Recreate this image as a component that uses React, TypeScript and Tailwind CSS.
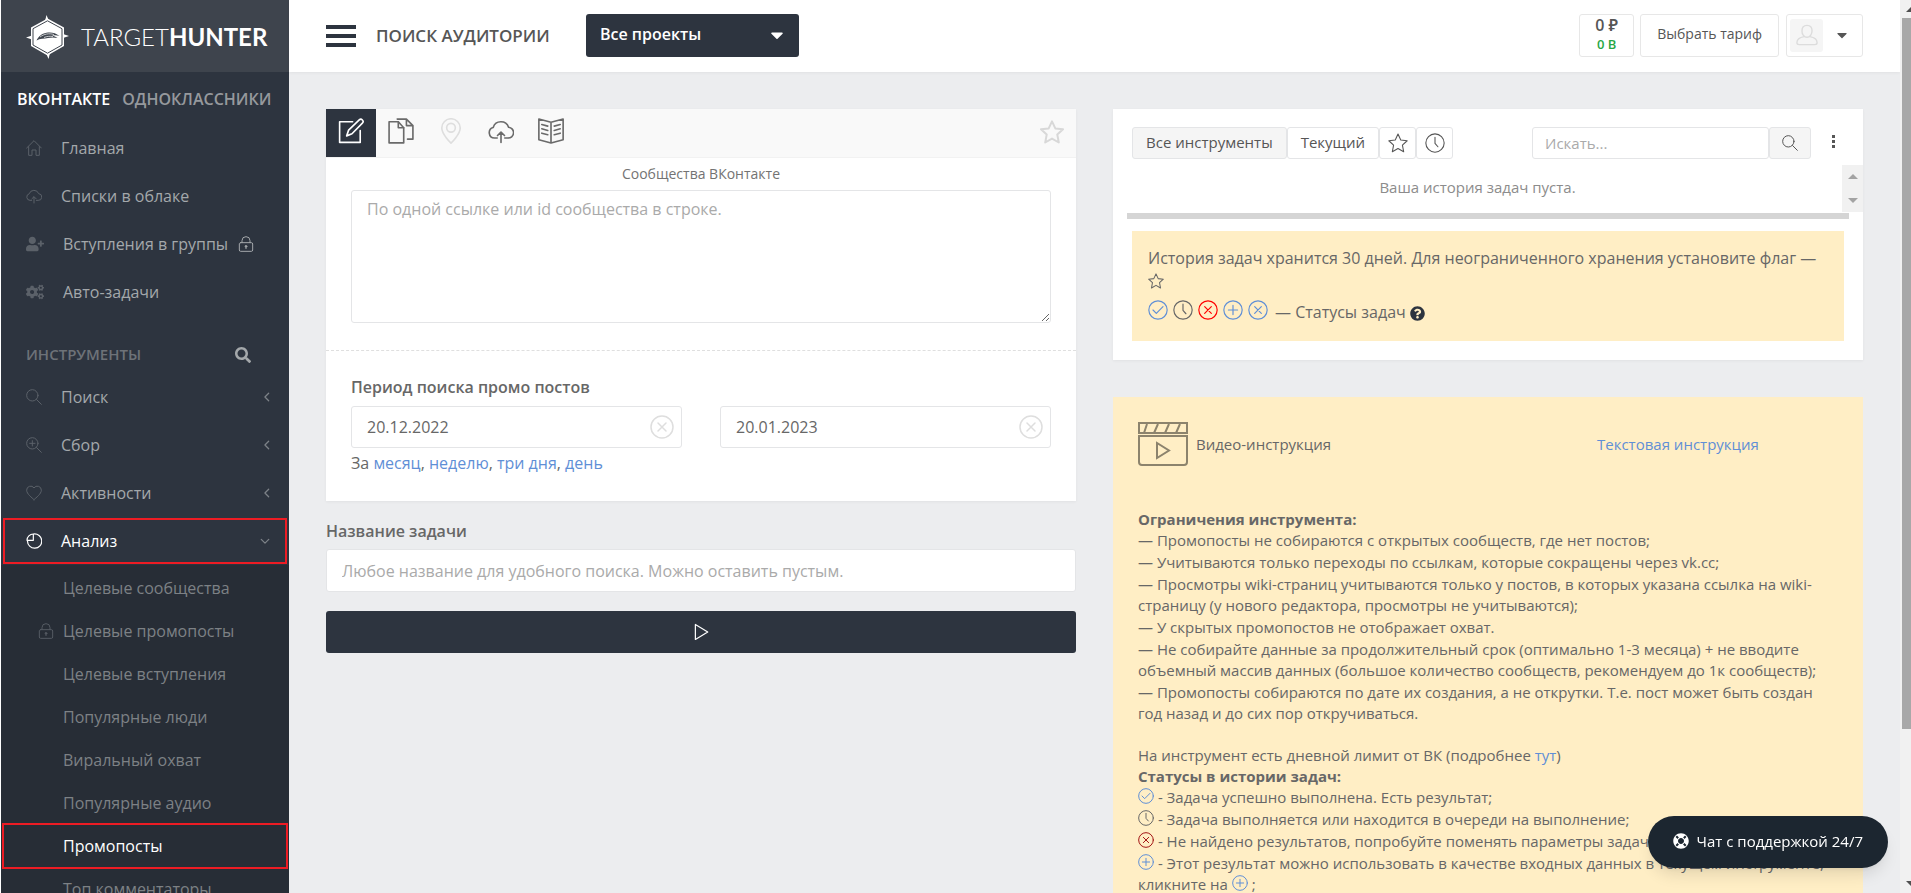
import React, { useState } from 'react';
import { FaCaretDown, FaCogs, FaLifeRing, FaQuestionCircle, FaSearch, FaUserPlus } from 'react-icons/fa';

interface IconProps {
  className?: string;
  strokeWidth?: number;
}

function Stroke({ className, strokeWidth = 1, children }: IconProps & { children: React.ReactNode }) {
  return (
    <svg
      className={className}
      viewBox="0 0 24 24"
      fill="none"
      stroke="currentColor"
      strokeWidth={strokeWidth}
      strokeLinejoin="round"
      strokeLinecap="round"
      aria-hidden="true"
    >
      {children}
    </svg>
  );
}

const HomeIcon = (p: IconProps) => (
  <Stroke {...p}>
    <path d="M1 12 12 1l11 11M4 10v13h5v-8h6v8h5V10" />
  </Stroke>
);

const CloudIcon = (p: IconProps) => (
  <Stroke {...p}>
    <path d="M8.500 18.500H6a5 5 0 0 1-1.200-9.800A7.500 7.500 0 0 1 19 8.500a5 5 0 0 1-.8 10h-2.700M12 22.500v-9M8.800 16.200 12 13l3.200 3.200" />
  </Stroke>
);

const LockIcon = (p: IconProps) => (
  <Stroke {...p}>
    <path d="M4 10h16a2 2 0 0 1 2 2v9a2 2 0 0 1-2 2H4a2 2 0 0 1-2-2v-9c0-1.100.9-2 2-2ZM6 10V7a6 6 0 0 1 12 0v3M12 17v2" />
    <circle cx="12" cy="15.500" r="1.300" fill="currentColor" />
  </Stroke>
);

const SearchIcon = (p: IconProps) => (
  <Stroke {...p}>
    <circle cx="9.500" cy="9.500" r="8.500" />
    <path d="m15.800 15.800 7.200 7.200" />
  </Stroke>
);

const ZoomInIcon = (p: IconProps) => (
  <Stroke {...p}>
    <circle cx="9.500" cy="9.500" r="8.500" />
    <path d="m15.800 15.800 7.200 7.200M9.500 5.500v8M5.500 9.500h8" />
  </Stroke>
);

const HeartIcon = (p: IconProps) => (
  <Stroke {...p}>
    <path d="M12 22C9 19 1 13.500 1 7.800a6 6 0 0 1 11-3.400A6 6 0 0 1 23 7.800C23 13.500 15 19 12 22Z" />
  </Stroke>
);

const PieIcon = (p: IconProps) => (
  <Stroke {...p}>
    <path d="M11.500 1.500A10.700 10.700 0 1 1 2.200 12M11 1.500v9.500H1.500a9.500 9.500 0 0 1 9.500-9.500Z" />
  </Stroke>
);

const EditIcon = (p: IconProps) => (
  <Stroke {...p}>
    <path d="M13.500 3.500H1.500v19h19v-11" />
    <path d="m8 16.500 1.800-5.300 9.800-9.400a2 2 0 0 1 2.900 2.900l-9.600 9.800L8 16.500Z" />
  </Stroke>
);

const CopyIcon = (p: IconProps) => (
  <Stroke {...p}>
    <path d="M1 3.500h8.500l5 5.500v14H1v-19.500Z" />
    <path d="M9.500 3.500V9h5M8.500 1h8.500l6 6v12.500h-5M17 1v6h6" />
  </Stroke>
);

const PinIcon = (p: IconProps) => (
  <Stroke {...p}>
    <path d="M12 23.200S20.500 15 20.500 9.200a8.500 8.500 0 0 0-17 0C3.500 15 12 23.200 12 23.200Z" />
    <circle cx="12" cy="9" r="4" />
  </Stroke>
);

const BookIcon = (p: IconProps) => (
  <Stroke {...p}>
    <path d="M12 4 .8 1v19L12 23l11.200-3V1L12 4Zm0 0v19" />
    <path d="m3.500 6 5.500 1.500M3.500 10 9 11.500M3.500 14 9 15.500M20.500 6 15 7.500m5.500 2.500L15 11.500m5.500 2.500L15 15.500" />
  </Stroke>
);

const StarIcon = (p: IconProps) => (
  <Stroke {...p}>
    <path d="m12 1.300 3.300 7.100 7.700.9-5.700 5.300 1.500 7.900-6.800-3.900-6.800 3.900 1.500-7.900L1 9.300l7.700-.9L12 1.300Z" />
  </Stroke>
);

const ClockIcon = (p: IconProps) => (
  <Stroke {...p}>
    <circle cx="12" cy="12" r="11" />
    <path d="M12 5v7.500l3.500 4" />
  </Stroke>
);

const CheckCircleIcon = (p: IconProps) => (
  <Stroke {...p}>
    <circle cx="12" cy="12" r="11" />
    <path d="m6 12 4 4 8-8" />
  </Stroke>
);

const CrossCircleIcon = (p: IconProps) => (
  <Stroke {...p}>
    <circle cx="12" cy="12" r="11" />
    <path d="m8 8 8 8m0-8-8 8" />
  </Stroke>
);

const PlusCircleIcon = (p: IconProps) => (
  <Stroke {...p}>
    <circle cx="12" cy="12" r="11" />
    <path d="M12 6.500v11M6.500 12h11" />
  </Stroke>
);

const UserIcon = (p: IconProps) => (
  <Stroke {...p}>
    <path d="M12 1.500c-3.500 0-5.500 2.500-5.500 6 0 3.800 2.300 7 5.500 7s5.500-3.200 5.500-7c0-3.500-2-6-5.500-6Z" />
    <path d="M8.800 13.700C4 14.500 1 17 1 20.500c0 1.500 1 2 2.500 2h17c1.500 0 2.500-.5 2.500-2 0-3.500-3-6-7.800-6.800" />
  </Stroke>
);

const ChevronIcon = (p: IconProps) => (
  <Stroke {...p}>
    <path d="m16 3-9 9 9 9" />
  </Stroke>
);

const PlayIcon = (p: IconProps) => (
  <Stroke {...p}>
    <path d="M4.500 2v20L21 12 4.500 2Z" />
  </Stroke>
);

function ClapperIcon() {
  return (
    <svg className="h-11 w-[50px] text-[#8c836d]" viewBox="0 0 50 44" fill="none" stroke="currentColor" strokeWidth="2" aria-hidden="true">
      <path d="M1 1h48v10H1zM9 2 6 11M20 2l-4 9M31 2l-4 9M42 2l-4 9" />
      <path d="M1 14h48v26a3 3 0 0 1-3 3H4a3 3 0 0 1-3-3V14Z" />
      <path d="M19 21v15l12-7.500L19 21Z" />
    </svg>
  );
}

function Logo() {
  return (
    <svg className="h-11 w-[43px]" viewBox="0 0 43 44" aria-hidden="true">
      <path d="m20.500 0 2.500 6h-4ZM22.500 44 20 38h4ZM0 22.500l6-2v4ZM43 21l-6-2v4Z" fill="#fff" />
      <path d="M21.500 3.500 38 12.500v18.500L21.500 40.500 5 31V12.500Z" fill="#fff" />
      <path d="M21.500 5.800 36 13.700v16.300L21.500 38.200 7 30V13.700Z" fill="none" stroke="#3e444d" strokeWidth="1" />
      <path d="M10.500 25.500c2-4 5-7 10-7.800 5-.8 9 .2 13 3.300-3-.8-5-.8-7.500-.2 2 .2 4 1 5.500 2.200-4-1-7-.5-9.500 0-4 .8-8 .3-11.500 2.500Z" fill="#3e444d" />
      <path d="M14 22c4-3 9-4 14-2.500M18 22.500c3-1.200 6-1.500 9-1" stroke="#fff" strokeWidth=".7" fill="none" />
    </svg>
  );
}

const mainNav = [
  { label: 'Главная', icon: <HomeIcon className="h-4 w-4" strokeWidth={1.5} /> },
  { label: 'Списки в облаке', icon: <CloudIcon className="h-4 w-4" strokeWidth={1.5} /> },
  { label: 'Вступления в группы', icon: <FaUserPlus className="mr-[19px] h-4 w-[18px]" />, locked: true },
  { label: 'Авто-задачи', icon: <FaCogs className="mr-[19px] h-4 w-[18px]" /> },
];

const toolNav = [
  { label: 'Поиск', icon: <SearchIcon className="h-4 w-4" strokeWidth={1.5} /> },
  { label: 'Сбор', icon: <ZoomInIcon className="h-4 w-4" strokeWidth={1.5} /> },
  { label: 'Активности', icon: <HeartIcon className="h-4 w-4" strokeWidth={1.5} /> },
  { label: 'Анализ', icon: <PieIcon className="h-4 w-4" strokeWidth={1.8} />, active: true },
];

const analysisNav = [
  { label: 'Целевые сообщества' },
  { label: 'Целевые промопосты', locked: true },
  { label: 'Целевые вступления' },
  { label: 'Популярные люди' },
  { label: 'Виральный охват' },
  { label: 'Популярные аудио' },
  { label: 'Промопосты', active: true },
  { label: 'Топ комментаторы' },
];

const limits = [
  'Промопосты не собираются с открытых сообществ, где нет постов;',
  'Учитываются только переходы по ссылкам, которые сокращены через vk.cc;',
  'Просмотры wiki-страниц учитываются только у постов, в которых указана ссылка на wiki-страницу (у нового редактора, просмотры не учитываются);',
  'У скрытых промопостов не отображает охват.',
  'Не собирайте данные за продолжительный срок (оптимально 1-3 месяца) + не вводите объемный массив данных (большое количество сообществ, рекомендуем до 1к сообществ);',
  'Промопосты собираются по дате их создания, а не открутки. Т.е. пост может быть создан год назад и до сих пор откручиваться.',
];

function Sidebar() {
  return (
    <aside className="ml-px flex w-72 shrink-0 flex-col overflow-hidden bg-[#2d343f] text-base text-[#a4a8ab]">
      <a href="#" className="flex h-[72px] shrink-0 items-center gap-3 bg-[#3e444d] pt-0.5 pl-[25px] font-[Lato,sans-serif] text-[24px] text-white">
        <Logo />
        <span>
          <span className="font-light">TARGET</span>
          <span className="font-bold">HUNTER</span>
        </span>
      </a>
      <div className="flex h-13 shrink-0 items-center gap-3 pt-px pl-4 font-semibold">
        <a href="#" className="text-white">ВКОНТАКТЕ</a>
        <a href="#" className="text-[#96999d]">ОДНОКЛАССНИКИ</a>
      </div>
      <nav>
        <ul>
          {mainNav.map((item) => (
            <li key={item.label}>
              <a href="#" className="flex h-12 items-center pl-[25px]">
                <span className="min-w-[35px] text-[#5b6169]">{item.icon}</span>
                {item.label}
                {item.locked && <LockIcon className="ml-2.5 h-4 w-4" strokeWidth={1.5} />}
              </a>
            </li>
          ))}
        </ul>
        <div className="flex h-[57px] items-center justify-between pt-5 pr-[38px] pl-[25px]">
          <h2 className="text-[15px] font-semibold text-[#6d7278]">ИНСТРУМЕНТЫ</h2>
          <button type="button" aria-label="Поиск инструмента">
            <FaSearch className="h-4 w-4" />
          </button>
        </div>
        <ul>
          {toolNav.map((item) => (
            <li key={item.label} className="relative">
              <a href="#" className={`flex h-12 items-center pr-[17px] pl-[25px] ${item.active ? 'text-white' : ''}`}>
                <span className={`w-[35px] ${item.active ? 'text-white' : 'text-[#5b6169]'}`}>{item.icon}</span>
                <span className="flex-1">{item.label}</span>
                <ChevronIcon className={`h-2.5 w-2.5 text-[#7d8288] ${item.active ? 'mr-0.5 -rotate-90' : ''}`} strokeWidth={3} />
              </a>
              {item.active && <span className="pointer-events-none absolute inset-x-0.5 inset-y-px border-2 border-[#ed1c24]" />}
            </li>
          ))}
        </ul>
        <ul className="bg-[#272d36] pt-px text-[#7d8185]">
          {analysisNav.map((item) => (
            <li key={item.label} className="relative">
              <a href="#" className={`flex h-[43px] items-center ${item.active ? 'text-white' : ''}`}>
                <span className="flex w-[62px] justify-end pr-[9px] text-[#555b63]">
                  {item.locked && <LockIcon className="h-4 w-4" strokeWidth={1.5} />}
                </span>
                {item.label}
              </a>
              {item.active && <span className="pointer-events-none absolute inset-x-px -top-px -bottom-0.5 border-2 border-[#ed1c24]" />}
            </li>
          ))}
        </ul>
      </nav>
    </aside>
  );
}

function Header() {
  return (
    <header className="flex h-[72px] shrink-0 items-center bg-white pr-[37px] pl-[37px] text-[#565656] shadow-[0_1px_3px_rgba(0,0,0,0.05)]">
      <button type="button" aria-label="Меню" className="mr-5 flex w-[30px] flex-col gap-[5px]">
        <span className="h-1 bg-[#2d343f]" />
        <span className="h-1 bg-[#2d343f]" />
        <span className="h-1 bg-[#2d343f]" />
      </button>
      <h1 className="w-[210px] text-[17px] font-semibold whitespace-nowrap">ПОИСК АУДИТОРИИ</h1>
      <div className="relative mb-0.5 w-[213px]">
        <select
          aria-label="Проект"
          className="h-[43px] w-full appearance-none rounded-[3px] bg-[#2d343f] px-3.5 pb-0.5 text-base font-semibold text-white"
        >
          <option>Все проекты</option>
        </select>
        <FaCaretDown className="pointer-events-none absolute top-[11px] right-3 h-5 w-5 text-white" />
      </div>
      <div className="mb-0.5 ml-auto flex">
        <a href="#" className="mr-1.5 flex h-[43px] w-[55px] flex-col items-center justify-center rounded-[3px] border border-[#e7e7e7] pb-0.5 font-semibold">
          <span className="text-base leading-5">0 ₽</span>
          <span className="text-[13px] leading-[18px] text-[#28a745]">0 B</span>
        </a>
        <a href="#" className="mr-[7px] flex h-[43px] items-center rounded-[3px] border border-[#e7e7e7] px-4 pb-0.5 text-sm font-medium">
          Выбрать тариф
        </a>
        <button type="button" aria-label="Профиль" className="flex h-[43px] w-[77px] items-center justify-between rounded-[3px] border border-[#e7e7e7] pr-3 pl-[3px]">
          <span className="flex h-[33px] w-[33px] items-center justify-center rounded-[3px] bg-[#f5f5f5] text-[#dcdcdc]">
            <UserIcon className="h-[22px] w-[22px]" strokeWidth={1.5} />
          </span>
          <FaCaretDown className="h-4 w-4" />
        </button>
      </div>
    </header>
  );
}

const inputTabs = [
  { label: 'Ввести вручную', icon: EditIcon },
  { label: 'Из задачи', icon: CopyIcon },
  { label: 'Точка на карте', icon: PinIcon, disabled: true },
  { label: 'Из облака', icon: CloudIcon },
  { label: 'Из каталога', icon: BookIcon },
];

function DateField({ label, initial }: { label: string; initial: string }) {
  const [value, setValue] = useState(initial);
  return (
    <div className="relative flex-1">
      <input
        type="text"
        aria-label={label}
        value={value}
        onChange={(e) => setValue(e.target.value)}
        className="h-[42px] w-full rounded-[3px] border border-[#e4e5e7] bg-white px-[15px] text-base"
      />
      <button type="button" aria-label="Очистить" onClick={() => setValue('')} className="absolute top-[9px] right-2 text-[#dedede]">
        <CrossCircleIcon className="h-6 w-6" strokeWidth={1.5} />
      </button>
    </div>
  );
}

function TaskForm() {
  const [tab, setTab] = useState(0);
  return (
    <form className="min-w-0 flex-1 text-base" onSubmit={(e) => e.preventDefault()}>
      <div className="bg-white pb-[26px] shadow-[0_1px_3px_rgba(0,0,0,0.05)]">
        <div className="flex h-[49px] items-start border-b border-[#f2f2f2] bg-[#f9f9f9]">
          {inputTabs.map(({ label, icon: TabIcon, disabled }, i) => (
            <button
              key={label}
              type="button"
              aria-label={label}
              disabled={disabled}
              onClick={() => setTab(i)}
              className={`flex h-12 w-[50px] items-center justify-center pb-1 ${
                tab === i ? 'bg-[#2d343f] text-white' : disabled ? 'text-[#dedede]' : 'text-[#6a6a6a]'
              }`}
            >
              <TabIcon className="h-[26px] w-[26px]" strokeWidth={1.5} />
            </button>
          ))}
          <button type="button" aria-label="В избранное" className="mt-[11px] mr-3 ml-auto text-[#d8d8d8]">
            <StarIcon className="h-6 w-6" strokeWidth={2} />
          </button>
        </div>
        <div className="px-[25px]">
          <label htmlFor="groups" className="block h-8 text-center text-sm leading-8 text-[#737373]">
            Сообщества ВКонтакте
          </label>
          <textarea
            id="groups"
            placeholder="По одной ссылке или id сообщества в строке."
            className="block h-[133px] w-full rounded-[3px] border border-[#e4e5e7] px-[15px] py-1.5 placeholder:text-[#aaaaaa]"
          />
        </div>
        <hr className="mt-[27px] border-dashed border-[#dfdfdf]" />
        <div className="px-[25px] pt-6">
          <h3 className="mb-[7px] font-semibold">Период поиска промо постов</h3>
          <div className="flex gap-[38px]">
            <DateField label="Дата начала" initial="20.12.2022" />
            <DateField label="Дата окончания" initial="20.01.2023" />
          </div>
          <p className="mt-[3px]">
            За <a href="#" className="text-[#5f8fd6]">месяц</a>, <a href="#" className="text-[#5f8fd6]">неделю</a>,{' '}
            <a href="#" className="text-[#5f8fd6]">три дня</a>, <a href="#" className="text-[#5f8fd6]">день</a>
          </p>
        </div>
      </div>
      <label htmlFor="task-name" className="mt-[18px] mb-1.5 block font-semibold">
        Название задачи
      </label>
      <input
        id="task-name"
        type="text"
        placeholder="Любое название для удобного поиска. Можно оставить пустым."
        className="block h-[43px] w-full rounded-[3px] border border-[#e4e5e7] bg-white px-[15px] placeholder:text-[#aaaaaa]"
      />
      <button type="submit" aria-label="Запустить" className="mt-[19px] flex h-[42px] w-full items-center justify-center rounded-[3px] bg-[#2d343f] text-white">
        <PlayIcon className="h-[18px] w-[18px]" strokeWidth={1.6} />
      </button>
    </form>
  );
}

function History() {
  const chip = 'flex h-8 items-center justify-center rounded-[3px] border border-[#e4e5e7]';
  return (
    <section className="bg-white pt-[18px] pb-[19px] shadow-[0_1px_3px_rgba(0,0,0,0.05)]">
      <div className="flex pr-[27px] pl-[19px] text-[15px] text-[#565656]">
        <button type="button" className={`${chip} bg-[#f5f5f5] px-[13px] pb-0.5`}>Все инструменты</button>
        <button type="button" className={`${chip} px-[13px] pb-0.5`}>Текущий</button>
        <button type="button" aria-label="Избранные" className={`${chip} w-[37px]`}>
          <StarIcon className="h-5 w-5" strokeWidth={1.3} />
        </button>
        <button type="button" aria-label="В процессе" className={`${chip} w-[37px]`}>
          <ClockIcon className="h-5 w-5" strokeWidth={1.3} />
        </button>
        <input
          type="search"
          aria-label="Искать"
          placeholder="Искать..."
          className="ml-auto h-8 w-[237px] rounded-[3px] border border-[#e4e5e7] px-3 placeholder:text-[#aaaaaa]"
        />
        <button type="button" aria-label="Найти" className={`${chip} w-[42px] bg-[#f5f5f5]`}>
          <SearchIcon className="h-4 w-4" strokeWidth={1.5} />
        </button>
        <button type="button" aria-label="Ещё" className="ml-[19px] flex h-7 w-1.5 flex-col items-center justify-center gap-0.5">
          <span className="h-[3px] w-[3px] bg-[#565656]" />
          <span className="h-[3px] w-[3px] bg-[#565656]" />
          <span className="h-[3px] w-[3px] bg-[#565656]" />
        </button>
      </div>
      <div className="mt-1.5 flex h-[47px]">
        <p className="flex-1 self-center pb-0.5 text-center text-[15px] text-[#8c8c8c]">Ваша история задач пуста.</p>
        <div className="flex w-[21px] flex-col items-center justify-between bg-[#f1f1f1] py-[9px]" aria-hidden="true">
          <span className="border-x-[5px] border-b-[5px] border-x-transparent border-b-[#a3a3a3]" />
          <span className="border-x-[5px] border-t-[5px] border-x-transparent border-t-[#a3a3a3]" />
        </div>
      </div>
      <div className="mt-px mr-3.5 ml-3.5 h-1.5 bg-[#d5d5d5]" />
      <div className="mx-[19px] mt-3 bg-[#ffeec5] px-4 pt-[15px] pb-[18px]">
        <p className="leading-6">
          История задач хранится 30 дней. Для неограниченного хранения установите флаг —{' '}
          <StarIcon className="inline h-4 w-4 align-[-1px]" strokeWidth={1.6} />
        </p>
        <div className="mt-[3px] flex items-center gap-[5px]">
          <CheckCircleIcon className="h-5 w-5 text-[#5f8fd6]" strokeWidth={1.4} />
          <ClockIcon className="h-5 w-5" strokeWidth={1.4} />
          <CrossCircleIcon className="h-5 w-5 text-[#ff0000]" strokeWidth={1.4} />
          <PlusCircleIcon className="h-5 w-5 text-[#5f8fd6]" strokeWidth={1.4} />
          <CrossCircleIcon className="h-5 w-5 text-[#5f8fd6]" strokeWidth={1.4} />
          <span className="flex items-center gap-1 pt-1 pl-0.5 leading-[22px]">
            — Статусы задач <FaQuestionCircle className="mt-0.5 h-[15px] w-[15px] text-[#2d343f]" />
          </span>
        </div>
      </div>
    </section>
  );
}

function Instruction() {
  const inline = 'inline h-4 w-4 align-[-1px]';
  return (
    <section className="bg-[#ffeec5] px-[25px] pt-[25px] pb-8 text-[15px] leading-[21px]">
      <div className="grid grid-cols-[1fr_241px] items-center">
        <a href="#" className="flex items-center gap-2">
          <ClapperIcon />
          Видео-инструкция
        </a>
        <a href="#" className="text-[#5f8fd6]">Текстовая инструкция</a>
      </div>
      <h3 className="mt-[43px] font-bold">Ограничения инструмента:</h3>
      <ul className="space-y-px">
        {limits.map((text) => (
          <li key={text}>{`— ${text}`}</li>
        ))}
      </ul>
      <p className="mt-[21px]">
        На инструмент есть дневной лимит от ВК (подробнее <a href="#" className="text-[#5f8fd6]">тут</a>)
      </p>
      <h3 className="font-bold">Статусы в истории задач:</h3>
      <ul className="space-y-px">
        <li><CheckCircleIcon className={`${inline} text-[#5f8fd6]`} strokeWidth={1.5} /> - Задача успешно выполнена. Есть результат;</li>
        <li><ClockIcon className={inline} strokeWidth={1.5} /> - Задача выполняется или находится в очереди на выполнение;</li>
        <li><CrossCircleIcon className={`${inline} text-[#a31515]`} strokeWidth={1.5} /> - Не найдено результатов, попробуйте поменять параметры задачи;</li>
        <li>
          <PlusCircleIcon className={`${inline} text-[#5f8fd6]`} strokeWidth={1.5} /> - Этот результат можно использовать в качестве входных данных в текущем инструменте, кликните на{' '}
          <PlusCircleIcon className={`${inline} text-[#5f8fd6]`} strokeWidth={1.5} /> ;
        </li>
      </ul>
    </section>
  );
}

function PageScrollbar() {
  return (
    <div className="flex w-[11px] shrink-0 flex-col overflow-hidden bg-[#f1f1f1] pl-0.5" aria-hidden="true">
      <div className="flex h-[18px] shrink-0 items-center pl-1">
        <span className="border-x-[6px] border-b-[6px] border-x-transparent border-b-[#505050]" />
      </div>
      <div className="min-h-0 flex-1">
        <div className="h-[83%] bg-[#a8a8a8]" />
      </div>
      <div className="flex h-[18px] shrink-0 items-center pl-1">
        <span className="border-x-[6px] border-t-[6px] border-x-transparent border-t-[#505050]" />
      </div>
    </div>
  );
}

export default function App() {
  return (
    <div className="flex h-screen overflow-hidden bg-white font-['Open_Sans','Noto_Sans',sans-serif] text-[#676767]">
      <Sidebar />
      <div className="flex min-w-0 flex-1 flex-col bg-[#ecedef]">
        <Header />
        <main className="flex min-h-0 flex-1 items-start gap-[37px] overflow-hidden p-[37px]">
          <TaskForm />
          <div className="flex min-w-0 flex-1 flex-col gap-[37px]">
            <History />
            <Instruction />
          </div>
        </main>
      </div>
      <PageScrollbar />
      <button type="button" className="fixed right-[23px] bottom-[25px] flex h-13 items-center gap-2 rounded-full bg-[#1c2630] px-[25px] pb-0.5 text-[15px] font-medium text-white shadow-lg">
        <FaLifeRing className="h-4 w-4" />
        Чат с поддержкой 24/7
      </button>
    </div>
  );
}
